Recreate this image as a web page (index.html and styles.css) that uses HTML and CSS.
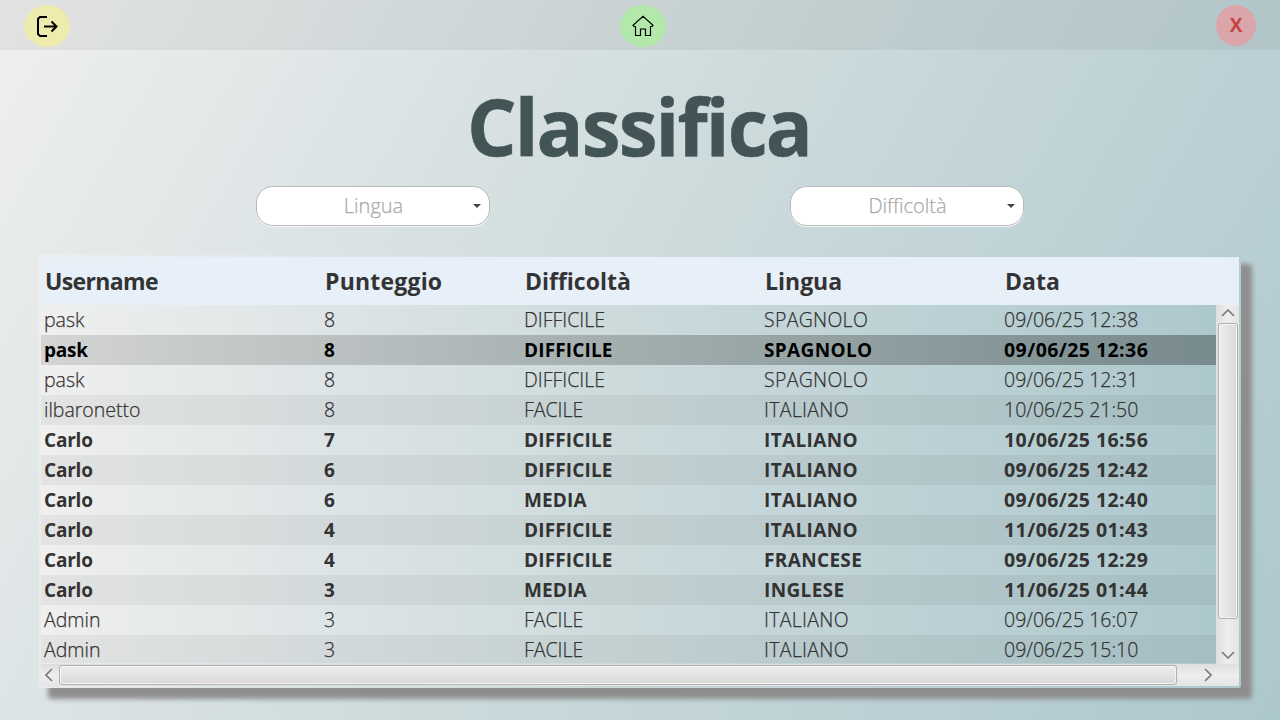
FILE: index.html
```html
<!DOCTYPE html>
<html lang="it"><head><meta charset="utf-8"><title>Classifica</title><link rel="stylesheet" href="styles.css"></head>
<body>
<header class="topbar">
<button class="round exit" aria-label="Esci"><svg width="24" height="24" viewBox="0 0 24 24" fill="none" stroke="#000" stroke-width="2"><path d="M12 3H5L3 5v15l2 2h7M9 12.500h12M16.500 7.500l5 5-5 5"/></svg></button>
<button class="round home" aria-label="Home"><svg width="22" height="22" viewBox="0 0 22 22" fill="none" stroke="#000" stroke-width="1.200"><path d="M3.500 11.500v9h5v-6.500h5v6.500h5v-9h1.500l1-1.200L11 1.200 1 10.300l1 1.200h1.500"/></svg></button>
<button class="round close">X</button>
</header>
<main>
<h1>Classifica</h1>
<div class="filters">
<div class="combo"><span>Lingua</span><i></i></div>
<div class="combo"><span>Difficoltà</span><i></i></div>
</div>
<section class="table">
<div class="head"><b class="username">Username</b><b class="score">Punteggio</b><b>Difficoltà</b><b>Lingua</b><b>Data</b></div>
<div class="middle">
<div class="rows" id="rows"></div>
<div class="vbar"><svg width="14" height="8" viewBox="0 0 14 8"><path d="M1 7l6-6 6 6"/></svg><div class="vthumb"></div><svg class="down" width="14" height="8" viewBox="0 0 14 8"><path d="M1 1l6 6 6-6"/></svg></div>
</div>
<div class="hbar"><svg width="8" height="14" viewBox="0 0 8 14"><path d="M7 1L1 7l6 6"/></svg><div class="hthumb"></div><svg class="right" width="8" height="14" viewBox="0 0 8 14"><path d="M1 1l6 6-6 6"/></svg></div>
</section>
</main>
<script src="script.js"></script>
</body></html>
```
FILE: styles.css
```css
*{box-sizing:border-box}
body{margin:0;width:1280px;height:720px;overflow:hidden;font-family:"Open Sans","Noto Sans",sans-serif;color:#333;background:linear-gradient(119.36deg,#efefef 0%,#dbe3e4 28%,#ccdadb 50%,#c8d8db 56%,#adc8cd 100%)}
.topbar{height:50px;background:rgba(0,0,0,.05);display:flex;justify-content:space-between;align-items:flex-start;padding:5px 24px 0}
.round{border:0;padding:0;border-radius:50%;width:46px;height:42px;display:flex;align-items:center;justify-content:center}
.exit{background:#eeebaf}
.home{background:#b2e9ab}
.close{background:#dba6a9;color:#c54245;width:40px;height:41px;font:700 19px "Open Sans",sans-serif;padding-bottom:1px}
main{padding:0 39px}
h1{margin:27px 0 0;height:109px;padding-right:2px;line-height:98px;font-size:78px;font-weight:700;color:#435456;text-align:center;letter-spacing:-1.900px;font-variant-ligatures:none;-webkit-text-stroke:.5px #435456}
.filters{display:flex;justify-content:space-between;width:768px;margin-left:217px}
.combo{width:234px;height:40px;border:1px solid #bababa;border-radius:17px;background:#fff;box-shadow:0 1px 0 #f3f6f6;display:flex;align-items:center;padding:0 8px 1px 0;font-size:20px;font-weight:300;color:#aaa;-webkit-text-stroke:.25px #aaa}
.combo span{flex:1;text-align:center;padding-left:17px}
.combo i{border:4px solid transparent;border-top-color:#444;border-bottom:0}
.table{margin-top:29px;width:1202px;height:433px;padding:2px;border-radius:3px;background:linear-gradient(109.8deg,#efefef,#ccdadb 50%,#adc8cd);box-shadow:10px 10px 5px 1px #8e8e8e}
.head{height:48px;background:#e7eff9;display:grid;grid-template-columns:280px 200px 240px 240px 1fr;align-items:center;padding-left:4px;font-size:23px;white-space:nowrap}
.username{letter-spacing:-.650px}
.score{letter-spacing:.200px}
.middle{display:flex;height:359px}
.rows{width:1175px;height:358px;overflow:hidden}
.row{height:30px;line-height:30px;display:grid;grid-template-columns:280px 200px 240px 240px 1fr;padding-left:3px;font-size:19.500px;font-weight:300;white-space:nowrap;-webkit-text-stroke:.25px #333;background:linear-gradient(90deg,#efefef,#dbe3e4 28%,#ccdadb 50%,#c8d8db 56%,#adc8cd)}
.row:nth-child(even){background:linear-gradient(rgba(0,0,0,.05),rgba(0,0,0,.05)),linear-gradient(90deg,#efefef,#dbe3e4 28%,#ccdadb 50%,#c8d8db 56%,#adc8cd)}
.row span:nth-child(4){letter-spacing:.300px}
.row.bold{font-weight:700;font-size:19px;line-height:31px;-webkit-text-stroke:0}
.row.bold span:first-child{letter-spacing:-.200px}
.row.bold span:nth-child(3){letter-spacing:.150px}
.row.bold span:nth-child(4){letter-spacing:.350px}
.row.bold span:last-child{font-size:19.500px;line-height:30px;letter-spacing:.430px}
.row.selected:nth-child(even){color:#000;background:linear-gradient(90deg,#d4d4d4,#a2adae 50%,#778a8d)}
.vbar{width:23px;padding-top:4px;background:linear-gradient(90deg,#dedede,#eee 50%,#e4e4e4);display:flex;flex-direction:column;align-items:center}
svg{display:block;flex:none}
.vbar svg,.hbar svg{fill:none;stroke:#777;stroke-width:1.600}
.vthumb,.hthumb{border:1px solid #b0b0b0;border-radius:3px;box-shadow:inset 0 0 0 1px #f5f5f5}
.vthumb{width:20px;height:296px;margin-top:6px;background:linear-gradient(90deg,#eee,#d9d9d9)}
.down{margin-top:32px}
.hbar{height:22px;display:flex;align-items:center;padding-left:4px;background:linear-gradient(#dedede,#eee 50%,#e4e4e4)}
.hthumb{width:1118px;height:20px;margin-left:6px;background:linear-gradient(#eee,#d9d9d9)}
.right{margin-left:27px}
```
FILE: script.js
```js
const rows = [
 ['pask','8','DIFFICILE','SPAGNOLO','09/06/25 12:38'],
 ['pask','8','DIFFICILE','SPAGNOLO','09/06/25 12:36','bold selected'],
 ['pask','8','DIFFICILE','SPAGNOLO','09/06/25 12:31'],
 ['ilbaronetto','8','FACILE','ITALIANO','10/06/25 21:50'],
 ['Carlo','7','DIFFICILE','ITALIANO','10/06/25 16:56','bold'],
 ['Carlo','6','DIFFICILE','ITALIANO','09/06/25 12:42','bold'],
 ['Carlo','6','MEDIA','ITALIANO','09/06/25 12:40','bold'],
 ['Carlo','4','DIFFICILE','ITALIANO','11/06/25 01:43','bold'],
 ['Carlo','4','DIFFICILE','FRANCESE','09/06/25 12:29','bold'],
 ['Carlo','3','MEDIA','INGLESE','11/06/25 01:44','bold'],
 ['Admin','3','FACILE','ITALIANO','09/06/25 16:07'],
 ['Admin','3','FACILE','ITALIANO','09/06/25 15:10']
];
document.getElementById('rows').innerHTML = rows.map(r =>
 `<div class="row ${r[5] || ''}">${r.slice(0,5).map(t => `<span>${t}</span>`).join('')}</div>`).join('');
```
